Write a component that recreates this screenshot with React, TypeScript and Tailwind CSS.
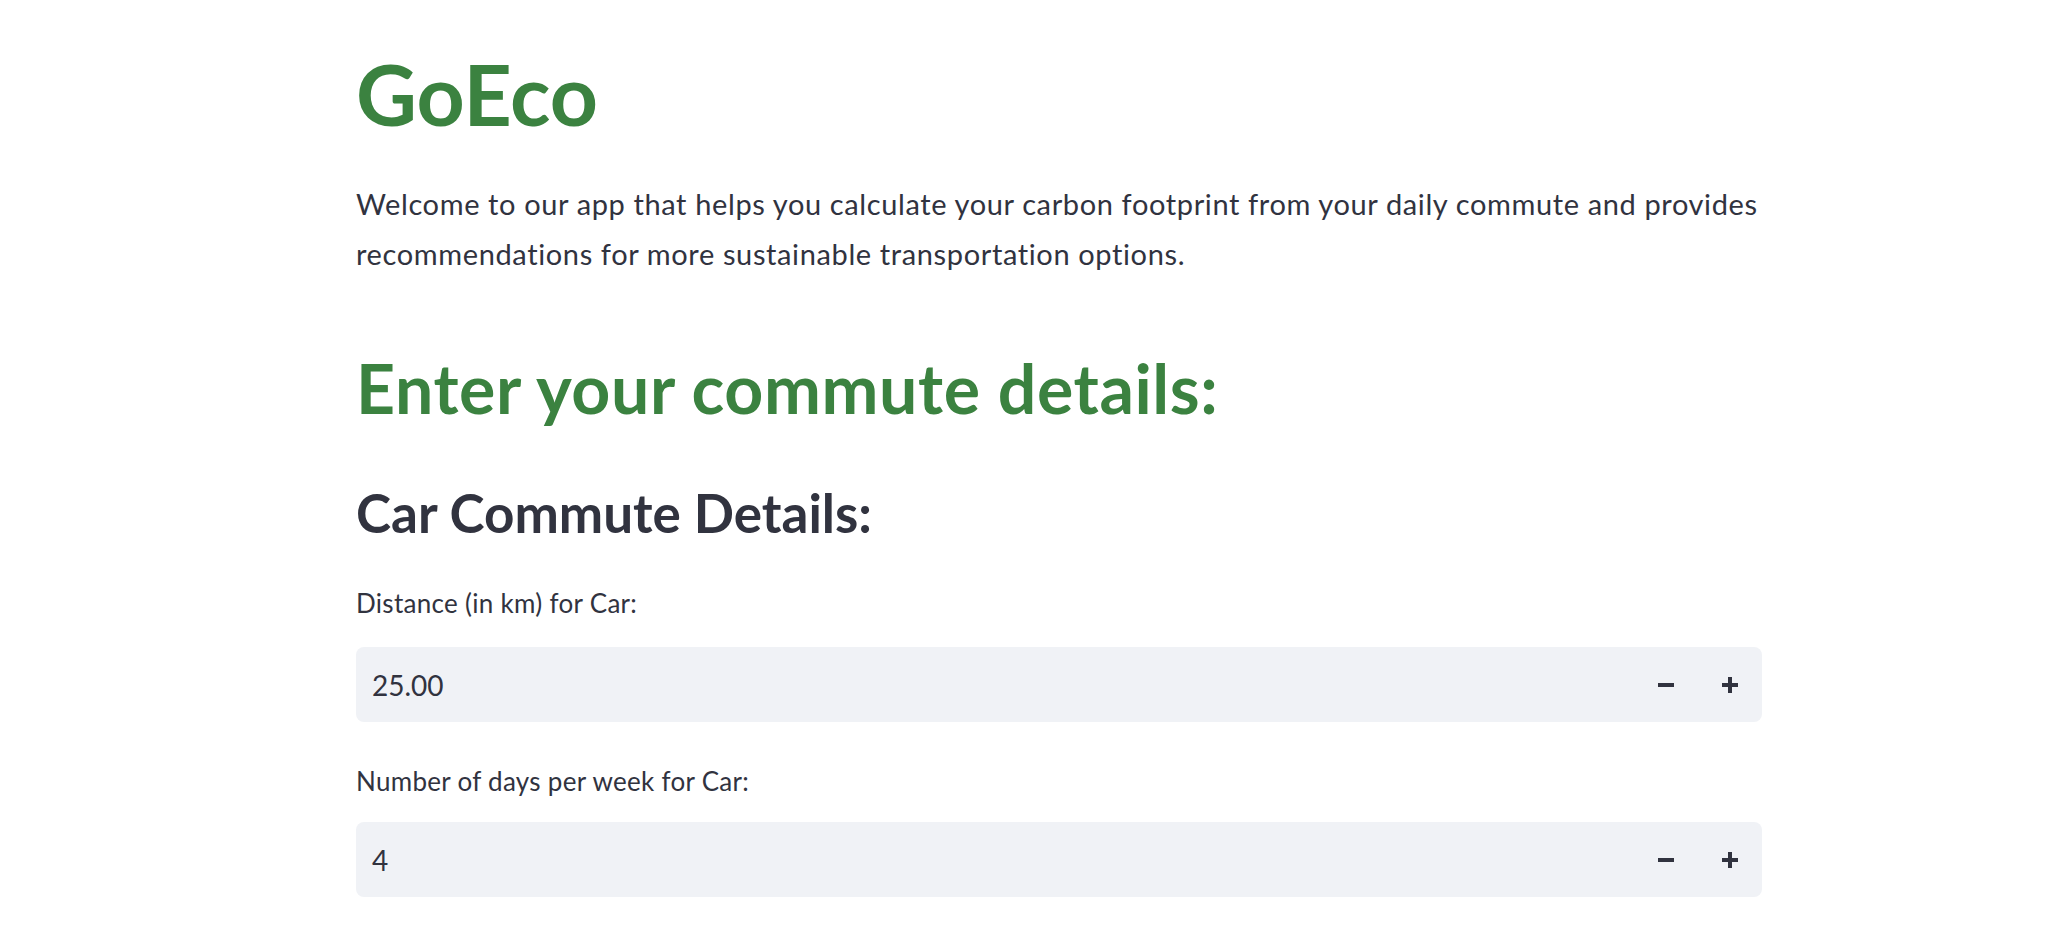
import React from "react";

// Streamlit-style page, GoEco commute calculator

const font = "font-['Lato','Noto_Sans',sans-serif]";

function Minus() {
  return (
    <svg width="16" height="16" viewBox="0 0 16 16" fill="#31333f">
      <rect x="0" y="6" width="16" height="4" />
    </svg>
  );
}

function Plus() {
  return (
    <svg width="16" height="16" viewBox="0 0 16 16" fill="#31333f">
      <rect x="0" y="6" width="16" height="4" />
      <rect x="6" y="0" width="4" height="16" />
    </svg>
  );
}

function NumberInput({
  label,
  value,
  className = "",
  gap = "mt-[28px]",
}: {
  label: string;
  value: string;
  className?: string;
  gap?: string;
}) {
  return (
    <div className={className}>
      <label className="block text-[26px] leading-[32px] tracking-[0.3px] text-[#31333f]">{label}</label>
      <div className={`${gap} h-[75px] w-full rounded-lg bg-[#f0f2f6] flex items-center`}>
        <div className="flex-1 pl-[16px] text-[28px] leading-[32px] text-[#31333f]">{value}</div>
        <button className="w-[64px] h-full grid place-items-center" aria-label="Decrement">
          <Minus />
        </button>
        <button className="w-[64px] h-full grid place-items-center rounded-r-lg" aria-label="Increment">
          <Plus />
        </button>
      </div>
    </div>
  );
}

export default function App() {
  return (
    <div className={`min-h-[928px] bg-white ${font} pl-[356px] pt-[44px]`}>
      <div className="w-[1406px]">
        <h1 className="text-[84px] leading-[100px] font-bold text-[#3b8240]">GoEco</h1>
        <p className="mt-[35px] text-[29px] leading-[50px] tracking-[0.62px] text-[#31333f]">
          Welcome to our app that helps you calculate your carbon footprint from your daily commute and provides
          recommendations for more sustainable transportation options.
        </p>
        <h2 className="mt-[69px] text-[68px] leading-[80px] tracking-[0.6px] font-bold text-[#3b8240]">
          Enter your commute details:
        </h2>
        <h3 className="mt-[53px] text-[53px] leading-[64px] font-bold text-[#31333f]">Car Commute Details:</h3>
        <NumberInput className="mt-[42px]" label="Distance (in km) for Car:" value="25.00" />
        <NumberInput className="mt-[43px]" gap="mt-[25px]" label="Number of days per week for Car:" value="4" />
      </div>
    </div>
  );
}
